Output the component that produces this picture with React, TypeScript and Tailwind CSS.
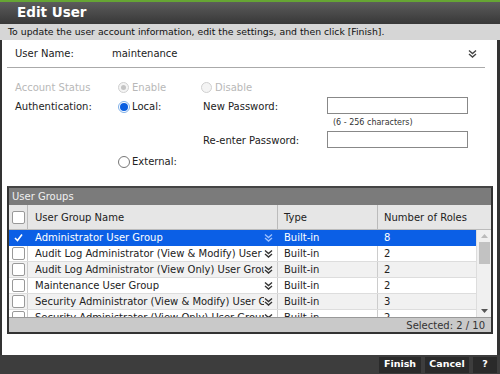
import React from "react";

const F = { fontFamily: '"DejaVu Sans", Verdana, sans-serif' };

function Chevrons({ className = "" }: { className?: string }) {
  return (
    <svg width="9" height="9" viewBox="0 0 9 9" className={className}>
      <path d="M1 1.5 L4.5 4.5 L8 1.5" fill="none" stroke="currentColor" strokeWidth="1.4" />
      <path d="M1 5 L4.5 8 L8 5" fill="none" stroke="currentColor" strokeWidth="1.4" />
    </svg>
  );
}

function Radio({ checked, disabled }: { checked?: boolean; disabled?: boolean }) {
  if (disabled) {
    return (
      <span className="inline-flex w-[11px] h-[11px] rounded-full border border-[#d0d0d0] bg-[#f4f4f4] items-center justify-center">
        {checked && <span className="w-[5px] h-[5px] rounded-full bg-[#c4c4c4]" />}
      </span>
    );
  }
  if (checked) {
    return (
      <span className="inline-flex w-[12px] h-[12px] rounded-full border border-[#7fb0e8] bg-white items-center justify-center">
        <span className="w-[8px] h-[8px] rounded-full bg-[#0b5fe0]" />
      </span>
    );
  }
  return <span className="inline-block w-[12px] h-[12px] rounded-full border border-[#777] bg-white" />;
}

function Check({ checked }: { checked?: boolean }) {
  if (checked) {
    return (
      <svg width="11" height="11" viewBox="0 0 11 11">
        <path d="M2 6 L4.5 8.5 L9 2.5" fill="none" stroke="white" strokeWidth="1.6" />
      </svg>
    );
  }
  return <span className="inline-block w-[13px] h-[13px] rounded-[2px] border border-[#999] bg-white" />;
}

const rows = [
  { name: "Administrator User Group", type: "Built-in", n: "8", sel: true },
  { name: "Audit Log Administrator (View & Modify) User Group", type: "Built-in", n: "2" },
  { name: "Audit Log Administrator (View Only) User Group", type: "Built-in", n: "2" },
  { name: "Maintenance User Group", type: "Built-in", n: "2" },
  { name: "Security Administrator (View & Modify) User Group", type: "Built-in", n: "3" },
  { name: "Security Administrator (View Only) User Group", type: "Built-in", n: "2" },
];

export default function App() {
  return (
    <div style={F} className="w-[500px] h-[374px] bg-[#333] flex flex-col overflow-hidden text-[#222]">
      <div className="h-[2px] bg-[#66a534]" />
      <div className="h-[22px] bg-gradient-to-b from-[#5c5c5c] to-[#383838] flex items-center pl-[17px]">
        <span className="text-white font-bold text-[13.5px] leading-none">Edit User</span>
      </div>
      <div className="h-[16px] bg-[#d6d6d6] flex items-center pl-[8px] text-[9.3px] text-[#111] whitespace-nowrap">
        To update the user account information, edit the settings, and then click [Finish].
      </div>
      <div className="flex-1 ml-[2px] mr-[3px] bg-white flex flex-col">
        <div className="h-[28px] flex items-center ml-[5px] mr-[12px] border-b border-[#aaa] text-[10px]">
          <span className="w-[105px] pl-[8px]">User Name:</span>
          <span>maintenance</span>
          <span className="ml-auto mr-[8px] text-[#444]"><Chevrons /></span>
        </div>
        <div className="relative h-[118px] text-[10px]">
          <div className="absolute left-[13px] top-[12px] text-[#b8b8b8]">Account Status</div>
          <div className="absolute left-[116px] top-[12px] flex items-center gap-[3px] text-[#b8b8b8]"><Radio checked disabled /><span>Enable</span></div>
          <div className="absolute left-[199px] top-[12px] flex items-center gap-[3px] text-[#b8b8b8]"><Radio disabled /><span>Disable</span></div>
          <div className="absolute left-[13px] top-[31px]">Authentication:</div>
          <div className="absolute left-[116px] top-[31px] flex items-center gap-[2px]"><Radio checked /><span>Local:</span></div>
          <div className="absolute left-[201px] top-[31px]">New Password:</div>
          <div className="absolute left-[325px] top-[29px] w-[141px] h-[17px] border border-[#888] bg-white" />
          <div className="absolute left-[331px] top-[49px] text-[8px] text-[#333]">(6 - 256 characters)</div>
          <div className="absolute left-[201px] top-[65px]">Re-enter Password:</div>
          <div className="absolute left-[325px] top-[63px] w-[141px] h-[17px] border border-[#888] bg-white" />
          <div className="absolute left-[116px] top-[86px] flex items-center gap-[2px]"><Radio /><span>External:</span></div>
        </div>
        <div className="ml-[5px] mr-[4px] border-2 border-[#333] border-t-[#444] flex flex-col text-[10px]">
          <div className="h-[17px] bg-[#7b7b7b] text-[#f0f0f0] flex items-center pl-[3px]">User Groups</div>
          <div className="flex h-[25px] bg-[#e6e6e6] border-b border-[#bbb]">
            <div className="w-[19px] flex items-center justify-center border-r border-[#bbb]"><Check /></div>
            <div className="w-[250px] flex items-center pl-[7px] border-r border-[#bbb]">User Group Name</div>
            <div className="w-[100px] flex items-center pl-[6px] border-r border-[#bbb]">Type</div>
            <div className="flex-1 flex items-center pl-[6px]">Number of Roles</div>
          </div>
          <div className="flex h-[87px] overflow-hidden">
            <div className="flex-1 flex flex-col">
              {rows.map((r, i) => (
                <div
                  key={i}
                  className={
                    "flex h-[16px] shrink-0 border-b " +
                    (r.sel ? "bg-[#0b5fe6] text-white border-[#0b5fe6]" : i % 2 === 0 ? "bg-[#f1f1f1] border-[#ddd]" : "bg-white border-[#ddd]")
                  }
                >
                  <div className={"w-[19px] flex items-center justify-center border-r " + (r.sel ? "border-[#0b5fe6]" : "border-[#ccc]")}>
                    <Check checked={r.sel} />
                  </div>
                  <div className={"w-[250px] flex items-center pl-[7px] pr-[4px] border-r overflow-hidden " + (r.sel ? "border-[#0b5fe6]" : "border-[#ccc]")}>
                    <span className="whitespace-nowrap overflow-hidden flex-1">{r.name}</span>
                    <span className={r.sel ? "text-[#9cc0ff]" : "text-[#333]"}><Chevrons /></span>
                  </div>
                  <div className={"w-[100px] flex items-center pl-[6px] border-r " + (r.sel ? "border-[#0b5fe6]" : "border-[#ccc]")}>{r.type}</div>
                  <div className="flex-1 flex items-center pl-[6px]">{r.n}</div>
                </div>
              ))}
            </div>
            <div className="w-[15px] bg-[#f0f0f0] border-l border-[#ddd] flex flex-col items-center">
              <div className="h-[12px] flex items-center text-[#bbb]">
                <svg width="7" height="4" viewBox="0 0 7 4"><path d="M0 4 L3.5 0 L7 4Z" fill="currentColor" /></svg>
              </div>
              <div className="w-[11px] h-[22px] bg-[#c2c2c2]" />
              <div className="flex-1" />
              <div className="h-[12px] flex items-center text-[#555]">
                <svg width="7" height="4" viewBox="0 0 7 4"><path d="M0 0 L3.5 4 L7 0Z" fill="currentColor" /></svg>
              </div>
            </div>
          </div>
          <div className="h-[15px] bg-[#c9c9c9] border-t border-[#999] flex items-center justify-end pr-[6px] text-[#333]">Selected: 2 / 10</div>
        </div>
        <div className="flex-1" />
      </div>
      <div className="h-[19px] bg-[#3d3d3d] flex items-center justify-end pr-[3px] gap-[4px] text-white font-bold text-[9.5px]">
        <div className="h-[16px] w-[42px] bg-[#2a2a2a] flex items-center justify-center">Finish</div>
        <div className="h-[16px] w-[44px] bg-[#2a2a2a] flex items-center justify-center">Cancel</div>
        <div className="h-[16px] w-[24px] bg-[#2a2a2a] flex items-center justify-center">?</div>
      </div>
    </div>
  );
}
